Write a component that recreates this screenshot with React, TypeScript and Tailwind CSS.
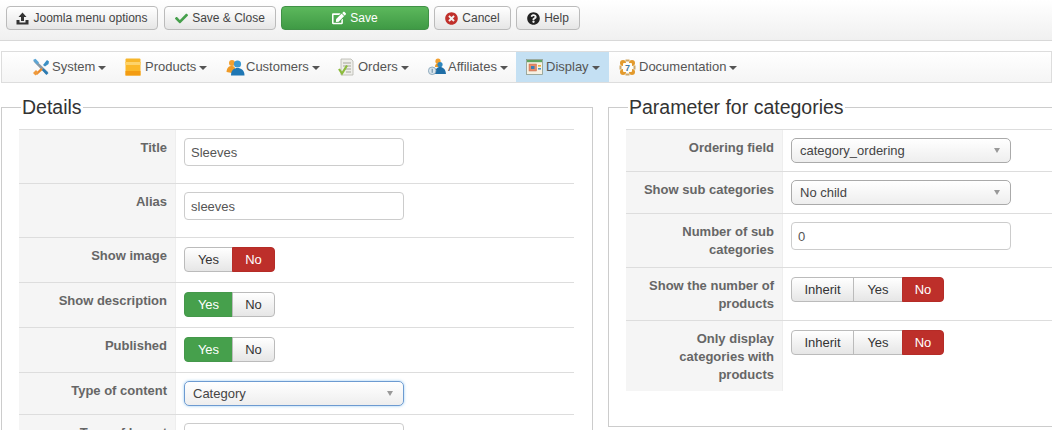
import React from 'react';
import { FaCheck, FaEdit, FaQuestionCircle, FaTimesCircle } from 'react-icons/fa';

const SystemIcon = () => (
  <svg width="18" height="18" viewBox="0 0 18 18">
    <path d="M3 1.5 L16 14 L14 16.5 L1.5 3.5 Z" fill="#8a9aa6" />
    <path d="M9 10 L3.5 15.5 L5 17 L11 11.5 Z" fill="#e8892c" />
    <path d="M1 15 L4 12 L6.5 14.5 L3.5 17.5 Z" fill="#ef9a3c" />
    <path d="M11 7 L15 2 L17 3.5 L16.5 6 L13 8.5 Z" fill="#3b8fc4" />
    <path d="M11.5 10.5 L16.5 15 L14.5 17 L10 12 Z" fill="#2a7cb4" />
    <path d="M1 2 L3.5 .8 L7 4.5 L5 6.5 Z" fill="#5ba6d6" />
  </svg>
);

const ProductsIcon = () => (
  <svg width="16" height="18" viewBox="0 0 16 18">
    <rect x="0.5" y="0.5" width="15" height="5" rx="1" fill="#f7b62a" />
    <rect x="0.5" y="4" width="15" height="13.5" fill="#fbb829" />
    <rect x="0.5" y="4" width="15" height="3" fill="#fdd36b" />
    <rect x="0.5" y="13" width="15" height="4.5" fill="#f39c12" />
  </svg>
);

const CustomersIcon = () => (
  <svg width="19" height="17" viewBox="0 0 19 17">
    <circle cx="6" cy="4" r="3" fill="#f2a030" />
    <path d="M0.5 13 C1 8 3 7 6 7 C8 7 9 8 9 10 L6 14 Z" fill="#ef9a26" />
    <circle cx="11.5" cy="5" r="3.6" fill="#3e9ad2" />
    <path d="M5 16.5 C5 11 8 9 11.5 9 C15 9 18.5 11 18.5 16.5 Z" fill="#1f77b4" />
  </svg>
);

const OrdersIcon = () => (
  <svg width="16" height="18" viewBox="0 0 16 18">
    <path d="M3 1 H13 L15 3 V17 H3 Z" fill="#eeeeea" stroke="#b5b5ad" strokeWidth="0.8" />
    <path d="M5 5 H13 M5 8 H13 M7 11 H13 M8 14 H13" stroke="#a5a59c" strokeWidth="1" />
    <path d="M1 11 L4 15.5 L9 7.5" fill="none" stroke="#8bbb3c" strokeWidth="2.2" />
  </svg>
);

const AffiliatesIcon = () => (
  <svg width="18" height="18" viewBox="0 0 18 18">
    <circle cx="10" cy="3.2" r="2.6" fill="#f2a030" />
    <path d="M7 9 C7 6 8.5 5.5 10 5.5 C12 5.5 13 6.5 13 9 Z" fill="#ef9a26" />
    <circle cx="12" cy="6.5" r="2.6" fill="#2f86bd" />
    <path d="M6.5 16 C7 11 9 9 12 9 C15 9 17.5 11 18 16 Z" fill="#1f6ea6" />
    <circle cx="4.2" cy="12.8" r="3.8" fill="#d8e4ec" stroke="#7d9db3" strokeWidth="0.8" />
    <path d="M4.2 10.8 V14.8" stroke="#5f87a3" strokeWidth="1" />
  </svg>
);

const DisplayIcon = () => (
  <svg width="17" height="16" viewBox="0 0 17 16">
    <rect x="0.5" y="0.5" width="16" height="15" fill="#f6f1e2" stroke="#8c9a8c" strokeWidth="0.8" />
    <rect x="1" y="1" width="15" height="2.2" fill="#5fa35f" />
    <rect x="3" y="5" width="7.5" height="7" fill="#e58b68" stroke="#c76b4c" strokeWidth="0.5" />
    <rect x="5" y="7" width="3.5" height="3" fill="#3a7fb5" />
    <rect x="12" y="6" width="3" height="1.6" fill="#e8b13c" />
    <rect x="12" y="9" width="3" height="1.6" fill="#4e94c4" />
  </svg>
);

const DocIcon = () => (
  <svg width="17" height="17" viewBox="0 0 17 17">
    <circle cx="4" cy="4" r="3" fill="#e39a2c" />
    <circle cx="13" cy="4" r="3" fill="#e39a2c" />
    <circle cx="4" cy="13" r="3" fill="#e39a2c" />
    <circle cx="13" cy="13" r="3" fill="#e39a2c" />
    <rect x="6.5" y="0.5" width="4" height="2" fill="#cfa765" />
    <rect x="6.5" y="14.5" width="4" height="2" fill="#cfa765" />
    <rect x="0.5" y="6.5" width="2" height="4" fill="#cfa765" />
    <rect x="14.5" y="6.5" width="2" height="4" fill="#cfa765" />
    <rect x="4" y="4" width="9" height="9" rx="1" fill="#fffdf6" />
    <text x="8.5" y="12" fontSize="9" fontWeight="700" textAnchor="middle" fill="#3c78a8" fontFamily="Liberation Sans">7</text>
  </svg>
);

const UploadIcon = () => (
  <svg width="13" height="13" viewBox="0 0 13 13" fill="#333">
    <path d="M6.5 0.5 L10.5 5 H8 V9 H5 V5 H2.5 Z" />
    <path d="M0.5 8 H3.5 V10.5 H9.5 V8 H12.5 V12.5 H0.5 Z" />
  </svg>
);

const ToolButton = ({ icon, label, className }: { icon: React.ReactNode; label: string; className: string }) => (
  <button className={`flex h-[24px] items-center justify-center gap-[4px] rounded-[4px] border border-[#bbb] bg-gradient-to-b from-white to-[#e6e6e6] text-[12px] text-[#444] ${className}`}>
    {icon}
    {label}
  </button>
);

const navItems = [
  { label: 'System', icon: <SystemIcon />, width: 'w-[93px]' },
  { label: 'Products', icon: <ProductsIcon />, width: 'w-[101px]' },
  { label: 'Customers', icon: <CustomersIcon />, width: 'w-[112px]' },
  { label: 'Orders', icon: <OrdersIcon />, width: 'w-[90px]' },
  { label: 'Affiliates', icon: <AffiliatesIcon />, width: 'w-[98px]' },
  { label: 'Display', icon: <DisplayIcon />, width: 'w-[93px]', active: true },
  { label: 'Documentation', icon: <DocIcon />, width: 'w-[133px]' }
];

const Toggle = ({ options }: { options: { label: string; tone?: 'green' | 'red' }[] }) => (
  <div className="flex h-[25px] rounded-[4px] text-[13px]">
    {options.map((opt, i) => (
      <span
        key={opt.label}
        className={[
          'flex h-full items-center justify-center border',
          opt.label === 'Inherit' ? 'w-[63px]' : opt.label === 'Yes' ? (options.length === 3 ? 'w-[50px]' : 'w-[49px]') : options.length === 3 ? 'w-[42px]' : 'w-[43px]',
          i === 0 ? 'rounded-l-[4px]' : '-ml-[1px]',
          i === options.length - 1 ? 'rounded-r-[4px]' : '',
          opt.tone === 'green' ? 'border-[#45984b] bg-[#46a04c] text-white' : '',
          opt.tone === 'red' ? 'z-10 border-[#b52c27] bg-[#bd2f2a] text-white' : '',
          !opt.tone ? 'border-[#bbb] bg-gradient-to-b from-white to-[#e6e6e6] text-[#333]' : ''
        ].join(' ')}
      >
        {opt.label}
      </span>
    ))}
  </div>
);

const yesOn = [{ label: 'Yes', tone: 'green' as const }, { label: 'No' }];
const noOn = [{ label: 'Yes' }, { label: 'No', tone: 'red' as const }];
const inheritNo = [{ label: 'Inherit' }, { label: 'Yes' }, { label: 'No', tone: 'red' as const }];

const TextInput = ({ value }: { value: string }) => (
  <input
    readOnly
    value={value}
    className="h-[28px] w-[220px] rounded-[4px] border border-[#ccc] bg-white px-[6px] text-[13px] text-[#555]"
  />
);

const Select = ({ value, focused }: { value: string; focused?: boolean }) => (
  <div className={`flex h-[25px] w-[220px] items-center justify-between rounded-[5px] border bg-gradient-to-b from-white to-[#eeeeee] pl-[8px] pr-[10px] text-[13px] text-[#444] ${focused ? 'border-[#6d9bd1] shadow-[0_0_3px_rgba(82,168,236,0.6)]' : 'border-[#aaa]'}`}>
    <span>{value}</span>
    <span className="border-x-[3px] border-t-[5px] border-x-transparent border-t-[#999]" />
  </div>
);

const Row = ({ label, height, children }: { label: React.ReactNode; height: string; children: React.ReactNode }) => (
  <div className={`flex border-t border-[#ddd] ${height}`}>
    <div className="w-[157px] shrink-0 border-r border-[#eee] bg-[#f5f5f5] pr-[8px] pt-[9px] text-right text-[13px] font-bold leading-[18px] text-[#666]">
      {label}
    </div>
    <div className="flex-1 pl-[8px] pt-[8px]">{children}</div>
  </div>
);

export default function App() {
  return (
    <div className="h-[430px] w-[1052px] overflow-hidden bg-white font-['Liberation_Sans',Arial,sans-serif]">
      {/* Toolbar */}
      <div className="flex h-[41px] gap-[5px] border-b border-[#d8d8d8] bg-gradient-to-b from-white to-[#f0f0f0] pl-[6px] pt-[6px]">
        <ToolButton icon={<UploadIcon />} label="Joomla menu options" className="mr-[1px] w-[152px]" />
        <ToolButton icon={<FaCheck className="text-[13px] text-[#46a04c]" />} label="Save & Close" className="w-[112px]" />
        <button className="flex h-[24px] w-[148px] items-center justify-center gap-[4px] rounded-[4px] border border-[#409146] bg-gradient-to-b from-[#5cb85c] to-[#3f9a45] text-[12px] text-white">
          <FaEdit className="text-[14px]" />
          Save
        </button>
        <ToolButton icon={<FaTimesCircle className="text-[13px] text-[#c0302b]" />} label="Cancel" className="w-[77px]" />
        <ToolButton icon={<FaQuestionCircle className="text-[13px] text-[#222]" />} label="Help" className="w-[64px]" />
      </div>

      {/* Menu */}
      <div className="ml-[1px] mt-[10px] flex h-[32px] border border-[#ddd] bg-gradient-to-b from-white to-[#f5f5f5] pl-[20px] text-[13px] text-[#555]">
        {navItems.map((item) => (
          <div
            key={item.label}
            className={`flex h-full shrink-0 items-center pl-[10px] ${item.width} ${item.active ? 'bg-[#c4e0f3]' : ''}`}
          >
            <span className="flex w-[20px] shrink-0 justify-start">{item.icon}</span>
            <span>{item.label}</span>
            <span className="ml-[3px] mt-[1px] border-x-[4px] border-t-[4px] border-x-transparent border-t-[#555]" />
          </div>
        ))}
      </div>

      <div className="ml-[1px] mt-[12px] flex gap-[15px]">
        {/* Details */}
        <fieldset className="h-[400px] w-[592px] shrink-0 border border-[#ccc] pl-[17px] pr-[18px] pt-[10px]">
          <legend className="ml-[2px] px-[1px] text-[19.5px] leading-[24px] text-[#333]">Details</legend>
          <Row label="Title" height="h-[54px]"><TextInput value="Sleeves" /></Row>
          <Row label="Alias" height="h-[54px]"><TextInput value="sleeves" /></Row>
          <Row label="Show image" height="h-[45px]"><div className="pt-[1px]"><Toggle options={noOn} /></div></Row>
          <Row label="Show description" height="h-[45px]"><div className="pt-[1px]"><Toggle options={yesOn} /></div></Row>
          <Row label="Published" height="h-[45px]"><div className="pt-[1px]"><Toggle options={yesOn} /></div></Row>
          <Row label="Type of content" height="h-[42px]"><Select value="Category" focused /></Row>
          <Row label="Type of layout" height="h-[54px]"><TextInput value="" /></Row>
        </fieldset>

        {/* Parameter for categories */}
        <fieldset className="h-[332px] w-[500px] shrink-0 border border-[#ccc] pl-[17px] pt-[10px]">
          <legend className="ml-[2px] px-[1px] text-[19.5px] leading-[24px] text-[#333]">Parameter for categories</legend>
          <Row label="Ordering field" height="h-[42px]"><Select value="category_ordering" /></Row>
          <Row label="Show sub categories" height="h-[42px]"><Select value="No child" /></Row>
          <Row label={<>Number of sub<br />categories</>} height="h-[54px]"><TextInput value="0" /></Row>
          <Row label={<>Show the number of<br />products</>} height="h-[53px]"><div className="pt-[1px]"><Toggle options={inheritNo} /></div></Row>
          <Row label={<>Only display<br />categories with<br />products</>} height="h-[71px]"><div className="pt-[1px]"><Toggle options={inheritNo} /></div></Row>
        </fieldset>
      </div>
    </div>
  );
}
